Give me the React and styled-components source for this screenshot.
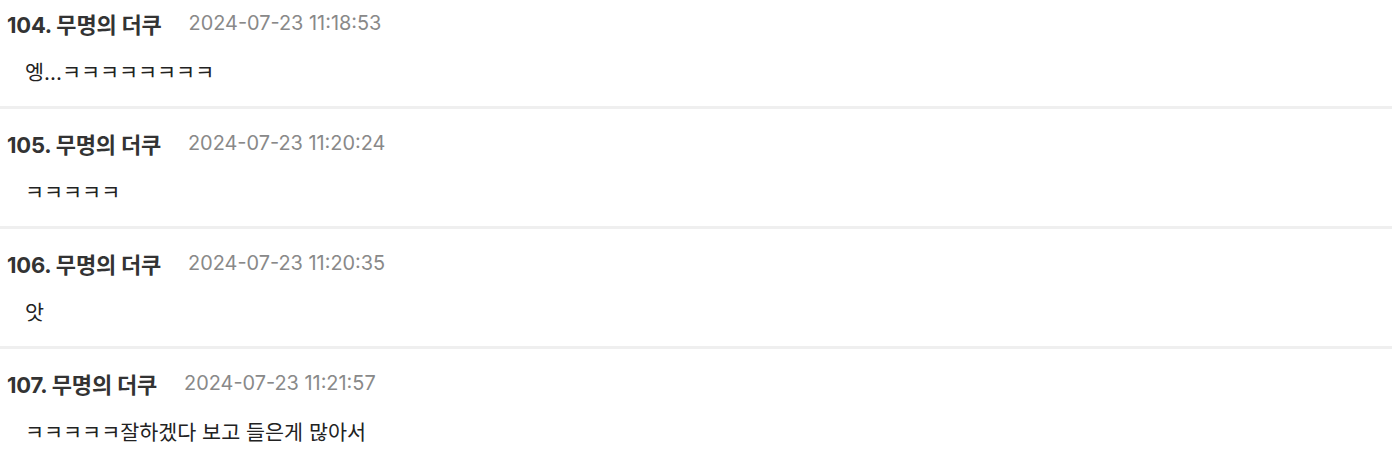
import React from "react";
import styled, { createGlobalStyle } from "styled-components";

const Global = createGlobalStyle`
  html, body { margin: 0; padding: 0; background: #fff; }
  body { font-family: Inter, "Noto Sans CJK KR", sans-serif; overflow: hidden; }
`;

const List = styled.div`
  display: flex;
  flex-direction: column;
  margin-top: -11px;
`;

const Row = styled.div`
  display: flex;
  flex-direction: column;
  padding: 21px 0 20px;
  border-bottom: 3px solid #efefef;
`;

const Header = styled.div`
  display: flex;
  align-items: center;
  gap: 27px;
  height: 26px;
  padding-left: 7px;
`;

const Name = styled.span`
  font-family: Inter, "Noto Sans CJK KR", sans-serif;
  font-weight: 700;
  font-size: 22px;
  color: #333;
  letter-spacing: -0.2px;
`;

const DateText = styled.span`
  font-family: Inter, "Noto Sans CJK KR", sans-serif;
  font-size: 19.9px;
  color: #898989;
`;

const Body = styled.div`
  margin-top: 24px;
  padding-left: 25px;
  height: 26px;
  line-height: 26px;
  font-size: 20.7px;
  color: #222;
  font-family: Inter, "Noto Sans CJK KR", sans-serif;
`;

const comments = [
  { n: 104, date: "2024-07-23 11:18:53", text: "엥...ㅋㅋㅋㅋㅋㅋㅋㅋ" },
  { n: 105, date: "2024-07-23 11:20:24", text: "ㅋㅋㅋㅋㅋ" },
  { n: 106, date: "2024-07-23 11:20:35", text: "앗" },
  { n: 107, date: "2024-07-23 11:21:57", text: "ㅋㅋㅋㅋㅋ잘하겠다 보고 들은게 많아서" },
];

export default function App() {
  return (
    <>
      <Global />
      <List>
        {comments.map((c) => (
          <Row key={c.n}>
            <Header>
              <Name>{c.n}. 무명의 더쿠</Name>
              <DateText>{c.date}</DateText>
            </Header>
            <Body>{c.text}</Body>
          </Row>
        ))}
      </List>
    </>
  );
}
